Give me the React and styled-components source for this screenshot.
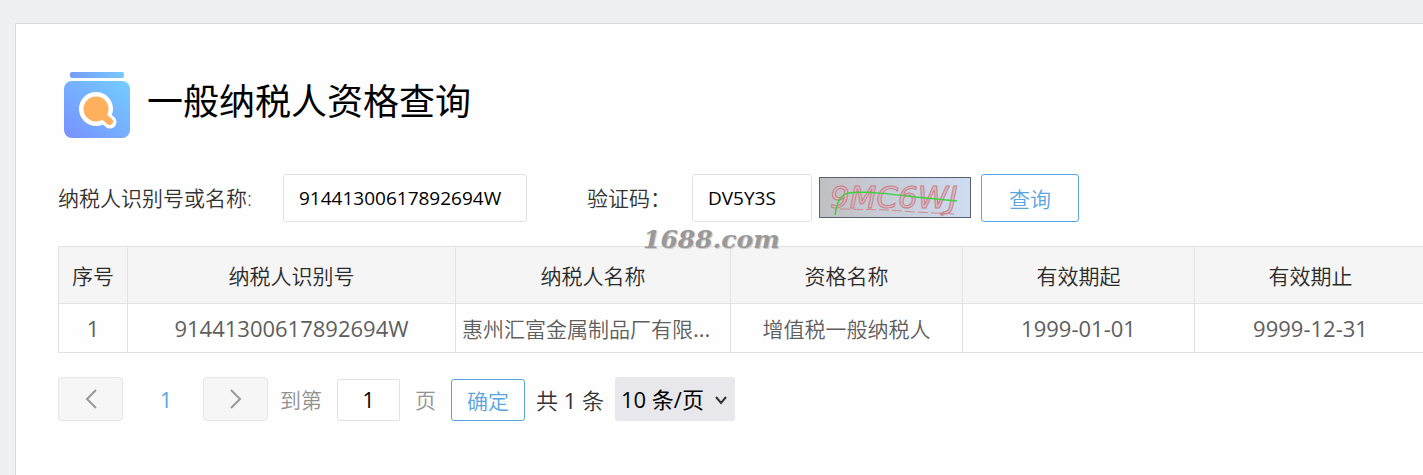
import { useState } from 'react';
import styled, { createGlobalStyle } from 'styled-components';

const GlobalStyle = createGlobalStyle`
    * {
        box-sizing: border-box;
    }

    body {
        margin: 0;
        background-color: #eff0f2;
        font-family: "Open Sans", "Noto Sans CJK SC", sans-serif;
        font-size: 21px;
        color: #333333;
    }

    button, input, select {
        font-family: inherit;
        font-size: inherit;
    }
`

const Page = styled.div`
    padding: 23px 0 0 15px;
    overflow: hidden;
`

const Panel = styled.main`
    position: relative;
    min-height: calc(100vh - 23px);
    padding: 46px 0 54px 42px;
    border: 1px solid #d9dadc;
    border-right: 0;
    border-bottom: 0;
    background-color: #fefefe;
`

const TitleRow = styled.header`
    display: flex;
    align-items: center;
    gap: 15px;
    height: 72px;
    margin-left: 4px;
`

const Title = styled.h1`
    margin: 0 0 8px;
    font-size: 36px;
    line-height: 48px;
    font-weight: 400;
    color: #000000;
`

const SearchForm = styled.form`
    display: flex;
    align-items: center;
    margin-top: 32px;
    height: 48px;
`

const FieldLabel = styled.label`
    flex: none;
    width: ${props => props.$width};
    line-height: 32px;
    font-weight: 350;
`

const TextInput = styled.input`
    width: ${props => props.$width};
    height: 48px;
    padding: 0 15px;
    border: 1px solid #e2e2e2;
    border-radius: 3px;
    background-color: #ffffff;
    font-size: 19px;
    color: #000000;
    outline: none;
`

const CodeField = styled.div`
    display: flex;
    align-items: center;
    margin-left: 60px;
`

const Captcha = styled.svg`
    display: block;
    flex: none;
    margin: 0 10px 2px 7px;
`

const OutlineButton = styled.button`
    width: ${props => props.$width};
    height: ${props => props.$height};
    padding: 0;
    border: 1px solid #5aa5e0;
    border-radius: 3px;
    background-color: #ffffff;
    font-weight: 350;
    color: #5aa5e0;
    cursor: pointer;
`

const TableWrap = styled.div`
    margin-top: 24px;
    overflow: hidden;
`

const Table = styled.table`
    width: 100%;
    min-width: 1369px;
    table-layout: fixed;
    border-collapse: collapse;

    th, td {
        padding: 0 6px;
        border: 1px solid #e2e2e2;
        font-weight: 350;
        text-align: center;
        white-space: nowrap;
    }

    th {
        height: 57px;
        background-color: #f5f5f5;
        color: #2a2a2a;
    }

    td {
        height: 49px;
        color: #5e5e5e;
    }

    td.name {
        text-align: left;
    }
`

const NumberText = styled.span`
    font-size: 22px;
    font-weight: 400;
`

const Pager = styled.nav`
    display: flex;
    align-items: flex-end;
    margin-top: 24px;
    line-height: 42px;
`

const PageButton = styled.button`
    display: flex;
    align-items: center;
    justify-content: center;
    width: 65px;
    height: 44px;
    padding: 0;
    border: 1px solid #e6e6e6;
    border-radius: 4px;
    background-color: #f6f6f6;
    color: #999999;
`

const CurrentPage = styled.span`
    width: 80px;
    padding-left: 6px;
    text-align: center;
    color: #5aa5e0;
`

const JumpLabel = styled.label`
    display: flex;
    align-items: center;
    margin: 0 15px 0 12px;
    gap: 15px;
    font-weight: 350;
    color: #929292;
`

const JumpInput = styled.input`
    width: 63px;
    height: 42px;
    padding: 0;
    border: 1px solid #e2e2e2;
    border-radius: 2px;
    background-color: #ffffff;
    text-align: center;
    color: #000000;
    outline: none;
`

const Total = styled.span`
    width: 90px;
    padding-left: 11px;
    font-size: 22px;
    font-weight: 350;
`

const SelectBox = styled.div`
    position: relative;

    select {
        display: block;
        appearance: none;
        width: 120px;
        height: 44px;
        padding: 0 0 0 6px;
        border: 0;
        border-radius: 3px;
        background-color: #e8e8ec;
        font-size: 22px;
        color: #000000;
        outline: none;
    }

    svg {
        position: absolute;
        top: 18px;
        right: 8px;
        pointer-events: none;
    }
`

const Watermark = styled.span`
    position: absolute;
    top: 200px;
    left: 627px;
    font-family: "DejaVu Serif", serif;
    font-size: 25px;
    line-height: 32px;
    font-weight: 700;
    font-style: italic;
    color: #999999;
    text-shadow: 1px 1px 1px #c8c8c8;
    pointer-events: none;
`

const columns = [
    { name: '序号', width: 69 },
    { name: '纳税人识别号', width: 328 },
    { name: '纳税人名称', width: 275 },
    { name: '资格名称', width: 232 },
    { name: '有效期起', width: 232 },
    { name: '有效期止', width: 232 },
];

const rows = [
    {
        id: '91441300617892694W',
        name: '惠州汇富金属制品厂有限',
        type: '增值税一般纳税人',
        from: '1999-01-01',
        to: '9999-12-31',
    },
];

const TitleIcon = () => (
    <svg width='70' height='72' viewBox='0 0 70 72' aria-hidden='true'>
        <defs>
            <linearGradient id='book' x1='0' y1='1' x2='1' y2='0'>
                <stop offset='0' stopColor='#7890ff' />
                <stop offset='1' stopColor='#73ceff' />
            </linearGradient>
            <linearGradient id='bar' x1='0' y1='0' x2='1' y2='0'>
                <stop offset='0' stopColor='#759cfa' />
                <stop offset='1' stopColor='#78c8ff' />
            </linearGradient>
        </defs>
        <rect x='8' y='2' width='54' height='6' rx='2' fill='url(#bar)' />
        <rect x='2' y='11' width='66' height='57' rx='8' fill='url(#book)' />
        <circle cx='34' cy='39' r='17' fill='#ffffff' />
        <path d='M42 47 L48 52' stroke='#ffffff' strokeWidth='13' strokeLinecap='round' />
        <circle cx='34' cy='39' r='12.5' fill='#ffb05c' />
        <path d='M39 44 L47.5 51.5' stroke='#ffb05c' strokeWidth='7' strokeLinecap='round' />
    </svg>
)

const CaptchaImage = () => (
    <Captcha width='152' height='41' viewBox='0 0 152 41' role='img' aria-label='验证码'>
        <defs>
            <linearGradient id='captchaBg' x1='0' y1='0' x2='1' y2='0'>
                <stop offset='0' stopColor='#c0c0c2' />
                <stop offset='1' stopColor='#cfdcf2' />
            </linearGradient>
        </defs>
        <rect x='0.5' y='0.5' width='151' height='40' fill='url(#captchaBg)' stroke='#56606e' />
        <text
            x='11'
            y='31'
            fill='#d3bcc4'
            stroke='#cb7f88'
            fontFamily='"DejaVu Sans", sans-serif'
            fontSize='31'
            fontStyle='italic'
            fontWeight='400'
        >
            9MC6WJ
        </text>
        <path d='M21 32 L70 33 L95 35 L137 37' fill='none' stroke='#cf8990' strokeDasharray='10 3' />
        <circle cx='123' cy='37' r='2' fill='#cf8990' />
        <path d='M16 38 C18 24 22 17 30 16 C48 14 72 17 96 20 L138 24' fill='none' stroke='#3fd03f' strokeWidth='1.5' />
    </Captcha>
)

const Chevron = ({ d, width, height, strokeWidth }) => (
    <svg width={width} height={height} viewBox={`0 0 ${width} ${height}`} aria-hidden='true'>
        <path d={d} fill='none' stroke='currentColor' strokeWidth={strokeWidth} />
    </svg>
)

const App = () => {
    const [taxId, setTaxId] = useState('91441300617892694W');
    const [code, setCode] = useState('DV5Y3S');
    const [page, setPage] = useState('1');

    return (
        <Page>
            <GlobalStyle />
            <Panel>
                <TitleRow>
                    <TitleIcon />
                    <Title>一般纳税人资格查询</Title>
                </TitleRow>

                <SearchForm onSubmit={e => e.preventDefault()}>
                    <FieldLabel htmlFor='taxId' $width='225px'>纳税人识别号或名称:</FieldLabel>
                    <TextInput id='taxId' $width='244px' value={taxId} onChange={e => setTaxId(e.target.value)} />
                    <CodeField>
                        <FieldLabel htmlFor='code' $width='105px'>验证码：</FieldLabel>
                        <TextInput id='code' $width='120px' value={code} onChange={e => setCode(e.target.value)} />
                        <CaptchaImage />
                    </CodeField>
                    <OutlineButton type='submit' $width='98px' $height='48px'>查询</OutlineButton>
                </SearchForm>

                <TableWrap>
                    <Table>
                        <colgroup>
                            {columns.map(col => <col key={col.name} width={col.width} />)}
                        </colgroup>
                        <thead>
                            <tr>
                                {columns.map(col => <th key={col.name} scope='col'>{col.name}</th>)}
                            </tr>
                        </thead>
                        <tbody>
                            {rows.map((row, i) => (
                                <tr key={row.id}>
                                    <td><NumberText>{i + 1}</NumberText></td>
                                    <td><NumberText>{row.id}</NumberText></td>
                                    <td className='name'>{row.name}<NumberText>...</NumberText></td>
                                    <td>{row.type}</td>
                                    <td><NumberText>{row.from}</NumberText></td>
                                    <td><NumberText>{row.to}</NumberText></td>
                                </tr>
                            ))}
                        </tbody>
                    </Table>
                </TableWrap>

                <Pager aria-label='分页'>
                    <PageButton type='button' aria-label='上一页'>
                        <Chevron d='M11 1 L2 10 L11 19' width={12} height={20} strokeWidth={2} />
                    </PageButton>
                    <CurrentPage>1</CurrentPage>
                    <PageButton type='button' aria-label='下一页'>
                        <Chevron d='M1 1 L10 10 L1 19' width={12} height={20} strokeWidth={2} />
                    </PageButton>
                    <JumpLabel>
                        到第
                        <JumpInput value={page} onChange={e => setPage(e.target.value)} />
                        页
                    </JumpLabel>
                    <OutlineButton type='button' $width='74px' $height='42px'>确定</OutlineButton>
                    <Total>共 <NumberText>1</NumberText> 条</Total>
                    <SelectBox>
                        <select aria-label='每页条数' defaultValue='10'>
                            <option value='10'>10 条/页</option>
                            <option value='20'>20 条/页</option>
                            <option value='50'>50 条/页</option>
                        </select>
                        <Chevron d='M1 2 L6 8 L11 2' width={12} height={10} strokeWidth={2} />
                    </SelectBox>
                </Pager>

                <Watermark>1688.com</Watermark>
            </Panel>
        </Page>
    )
}

export default App;
